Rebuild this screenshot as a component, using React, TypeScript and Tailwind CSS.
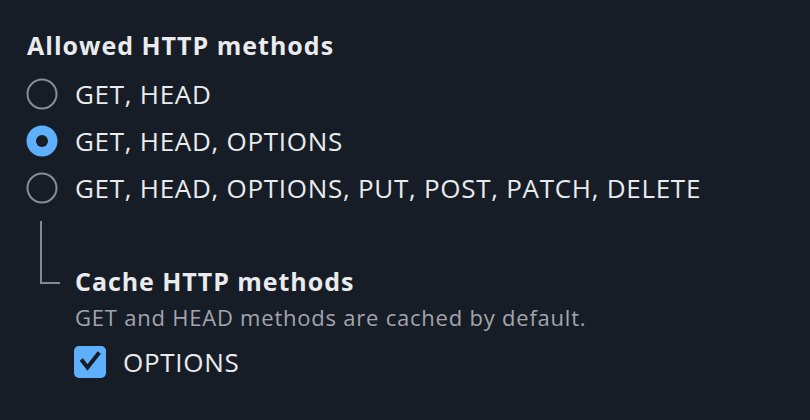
import React from "react";

const font = { fontFamily: '"Open Sans", "Liberation Sans", sans-serif' };

function Radio({ checked }: { checked?: boolean }) {
  return (
    <svg width="32" height="32" viewBox="0 0 32 32" className="shrink-0">
      {checked ? (
        <>
          <circle cx="16" cy="16" r="15.5" fill="#5eaffc" />
          <circle cx="16" cy="16" r="6" fill="#161d26" />
        </>
      ) : (
        <circle cx="16" cy="16" r="14.5" fill="none" stroke="#8c8c94" strokeWidth="2" />
      )}
    </svg>
  );
}

function RadioRow({ label, checked }: { label: string; checked?: boolean }) {
  return (
    <div className="flex h-[47px] items-center">
      <div className="ml-[26px] w-[49px]">
        <Radio checked={checked} />
      </div>
      <span className="text-[26px] leading-[34px] tracking-[0.72px] text-[#e9ebed]">{label}</span>
    </div>
  );
}

export default function App() {
  return (
    <div className="h-[420px] w-[810px] overflow-hidden bg-[#161d26]" style={font}>
      <div className="pt-[28px]">
        <div className="pl-[27px] text-[25px] font-bold leading-[34px] tracking-[1px] text-[#e9ebed]">
          Allowed HTTP methods
        </div>
        <div className="mt-[8px] flex flex-col">
          <RadioRow label="GET, HEAD" />
          <RadioRow label="GET, HEAD, OPTIONS" checked />
          <RadioRow label="GET, HEAD, OPTIONS, PUT, POST, PATCH, DELETE" />
        </div>
        <div className="flex">
          <div className="ml-[40px] w-[35px] shrink-0">
            <div className="mt-[10px] h-[63px] w-[20px] border-b-2 border-l-2 border-[#828a96]" />
          </div>
          <div className="flex flex-col">
            <div className="mt-[53px] text-[25px] font-bold leading-[34px] tracking-[0.95px] text-[#e9ebed]">
              Cache HTTP methods
            </div>
            <div className="mt-[5px] text-[22px] leading-[28px] tracking-[0.78px] text-[#a4a4ad]">
              GET and HEAD methods are cached by default.
            </div>
            <div className="mt-[14px] flex items-center">
              <div className="-ml-[1px] flex h-[32px] w-[32px] items-center justify-center rounded-[5px] bg-[#5eaffc]">
                <svg width="32" height="32" viewBox="0 0 32 32">
                  <polyline
                    points="8.5,15 13.5,21.5 24,8"
                    fill="none"
                    stroke="#161d26"
                    strokeWidth="4"
                    strokeLinecap="square"
                  />
                </svg>
              </div>
              <span className="ml-[17px] text-[26px] leading-[34px] tracking-[0.72px] text-[#e9ebed]">OPTIONS</span>
            </div>
          </div>
        </div>
      </div>
    </div>
  );
}
